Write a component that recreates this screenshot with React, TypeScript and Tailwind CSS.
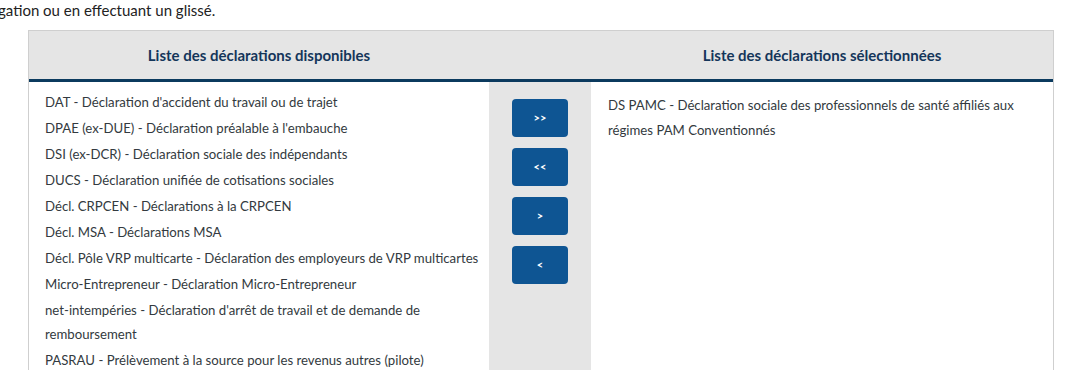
export default function App() {
  const available = [
    "DAT - Déclaration d'accident du travail ou de trajet",
    "DPAE (ex-DUE) - Déclaration préalable à l'embauche",
    "DSI (ex-DCR) - Déclaration sociale des indépendants",
    "DUCS - Déclaration unifiée de cotisations sociales",
    "Décl. CRPCEN - Déclarations à la CRPCEN",
    "Décl. MSA - Déclarations MSA",
    "Décl. Pôle VRP multicarte - Déclaration des employeurs de VRP multicartes",
    "Micro-Entrepreneur - Déclaration Micro-Entrepreneur",
    "net-intempéries - Déclaration d'arrêt de travail et de demande de remboursement",
    "PASRAU - Prélèvement à la source pour les revenus autres (pilote)",
  ];
  const buttons = [">>", "<<", ">", "<"];

  return (
    <div className="w-[1090px] h-[370px] overflow-hidden bg-white font-['Lato',sans-serif] text-[#333a40]">
      {/* Intro text (cut off on the left) */}
      <p className="text-[15px] leading-5 -ml-[2px] text-[#222]">
        gation ou en effectuant un glissé.
      </p>

      {/* Table */}
      <div className="ml-[28px] mt-[10px] w-[1026px] border border-[#cfcfcf]">
        <div className="grid grid-cols-[460px_102px_1fr] bg-[#e5e5e5] h-[51px] items-center border-b-[3px] border-[#0b3a5e] text-[15px] font-bold text-[#14355a]">
          <div className="text-center">Liste des déclarations disponibles</div>
          <div />
          <div className="text-center">Liste des déclarations sélectionnées</div>
        </div>

        <div className="grid grid-cols-[460px_102px_1fr] h-[300px] text-[13.2px]">
          <ul className="pl-4 pr-2 pt-[7px]">
            {available.map((item) => (
              <li key={item} className="py-[1px] leading-6">
                {item}
              </li>
            ))}
          </ul>

          <div className="bg-[#e5e5e5] flex flex-col items-center gap-[11px] pt-[17px]">
            {buttons.map((b) => (
              <button
                key={b}
                className="w-[56px] h-[38px] rounded-[4px] bg-[#0e5593] text-white text-[11px] font-bold"
              >
                {b}
              </button>
            ))}
          </div>

          <div className="pl-[17px] pr-4 pt-[11px] leading-[25px]">
            DS PAMC - Déclaration sociale des professionnels de santé affiliés aux régimes PAM Conventionnés
          </div>
        </div>
      </div>
    </div>
  );
}
